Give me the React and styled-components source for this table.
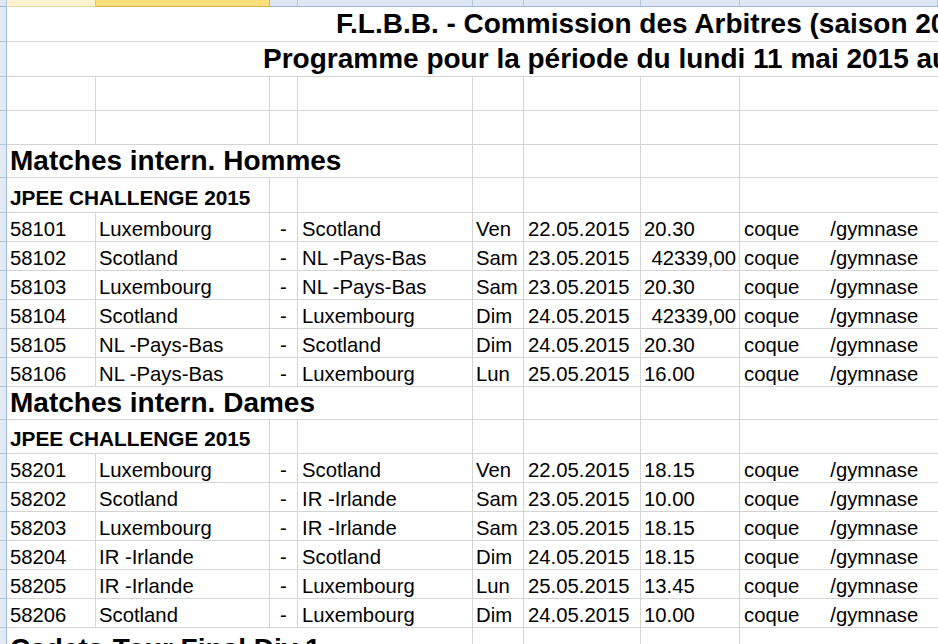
import styled, { createGlobalStyle } from 'styled-components';

const GlobalStyle = createGlobalStyle`
	html, body {
		margin: 0;
		padding: 0;
		background: #fff;
		overflow: hidden;
	}
	body {
		font-family: "Liberation Sans", Arial, sans-serif;
		color: #000;
	}
`

const COLUMNS = '7px 89px 174px 28px 175px 51px 117px 99px 1fr'
const GRID = '#d4d4d4'

const Sheet = styled.div`
	width: 938px;
	height: 644px;
	overflow: hidden;
`

const HeaderStrip = styled.div`
	display: grid;
	grid-template-columns: ${COLUMNS};
	height: 7px;
`

const ColHead = styled.div`
	box-sizing: border-box;
	background: ${p => p.$tone === 'hot' ? '#fbdf78' : p.$tone === 'warm' ? '#fdf3d0' : '#dde7f4'};
	border-bottom: 1px solid ${p => p.$tone === 'hot' ? '#d7b64f' : p.$tone === 'warm' ? '#e6d7a6' : '#9eb6ce'};
	border-right: 1px solid ${p => p.$tone === 'hot' ? '#d7b64f' : '#b3c5da'};
`

const Row = styled.div`
	display: grid;
	grid-template-columns: ${COLUMNS};
	height: ${p => p.$h}px;
`

const RowHead = styled.div`
	box-sizing: border-box;
	background: #e2eaf6;
	border-right: 1px solid #9eb6ce;
	border-bottom: 1px solid #b3c5da;
`

const Cell = styled.div`
	box-sizing: border-box;
	display: flex;
	align-items: flex-end;
	justify-content: ${p => p.$align === 'right' ? 'flex-end' : p.$align === 'center' ? 'center' : 'flex-start'};
	grid-column: span ${p => p.$span || 1};
	padding: 0 3px ${p => p.$pb || 0}px ${p => p.$indent || 3}px;
	border-bottom: 1px solid ${GRID};
	border-right: ${p => p.$open ? 'none' : `1px solid ${GRID}`};
	font-size: ${p => p.$size || 20.3}px;
	font-weight: ${p => p.$bold ? 700 : 400};
	white-space: nowrap;
	line-height: normal;
	min-width: 0;
`

const Hall = styled.span`
	margin-left: 31px;
`

const Title = ({ children, indent }) => (
	<Row $h={35}>
		<RowHead />
		<Cell $span={8} $open $bold $size={28} $indent={indent} $pb={1}>{children}</Cell>
	</Row>
)

const EmptyRow = ({ h }) => (
	<Row $h={h}>
		<RowHead />
		{[...Array(7)].map((_, i) => <Cell key={i} />)}
		<Cell $open />
	</Row>
)

// a bold line whose text runs over the first columns
const Heading = ({ children, h, span, size, pb }) => (
	<Row $h={h}>
		<RowHead />
		<Cell $span={span} $bold $size={size} $pb={pb}>{children}</Cell>
		{[...Array(7 - span)].map((_, i) => <Cell key={i} />)}
		<Cell $open />
	</Row>
)

const MatchRow = ({ m }) => {
	const [num, home, away, day, date, time] = m
	const isNumber = time.includes(',')
	return (
		<Row $h={29}>
			<RowHead />
			<Cell>{num}</Cell>
			<Cell>{home}</Cell>
			<Cell $align="center">-</Cell>
			<Cell $indent={4}>{away}</Cell>
			<Cell>{day}</Cell>
			<Cell $indent={4}>{date}</Cell>
			<Cell $align={isNumber ? 'right' : 'left'}>{time}</Cell>
			<Cell $open $indent={4}>coque<Hall>/gymnase</Hall></Cell>
		</Row>
	)
}

const hommes = [
	['58101', 'Luxembourg', 'Scotland', 'Ven', '22.05.2015', '20.30'],
	['58102', 'Scotland', 'NL -Pays-Bas', 'Sam', '23.05.2015', '42339,00'],
	['58103', 'Luxembourg', 'NL -Pays-Bas', 'Sam', '23.05.2015', '20.30'],
	['58104', 'Scotland', 'Luxembourg', 'Dim', '24.05.2015', '42339,00'],
	['58105', 'NL -Pays-Bas', 'Scotland', 'Dim', '24.05.2015', '20.30'],
	['58106', 'NL -Pays-Bas', 'Luxembourg', 'Lun', '25.05.2015', '16.00'],
]

const dames = [
	['58201', 'Luxembourg', 'Scotland', 'Ven', '22.05.2015', '18.15'],
	['58202', 'Scotland', 'IR -Irlande', 'Sam', '23.05.2015', '10.00'],
	['58203', 'Luxembourg', 'IR -Irlande', 'Sam', '23.05.2015', '18.15'],
	['58204', 'IR -Irlande', 'Scotland', 'Dim', '24.05.2015', '18.15'],
	['58205', 'IR -Irlande', 'Luxembourg', 'Lun', '25.05.2015', '13.45'],
	['58206', 'Scotland', 'Luxembourg', 'Dim', '24.05.2015', '10.00'],
]

export default function App() {
	return (
		<Sheet>
			<GlobalStyle />
			<HeaderStrip>
				<ColHead />
				<ColHead $tone="warm" />
				<ColHead $tone="hot" />
				{[...Array(6)].map((_, i) => <ColHead key={i} />)}
			</HeaderStrip>

			<Title indent={329}>F.L.B.B. - Commission des Arbitres (saison 2014-2015)</Title>
			<Title indent={256}>Programme pour la période du lundi 11 mai 2015 au dimanche 31 mai 2015</Title>
			<EmptyRow h={34} />
			<EmptyRow h={34} />

			<Heading h={33} span={4} size={28}>Matches intern. Hommes</Heading>
			<Heading h={35} span={2} size={20.8} pb={2}>JPEE CHALLENGE 2015</Heading>
			{hommes.map(m => <MatchRow key={m[0]} m={m} />)}

			<Heading h={33} span={4} size={28}>Matches intern. Dames</Heading>
			<Heading h={34} span={2} size={20.8} pb={2}>JPEE CHALLENGE 2015</Heading>
			{dames.map(m => <MatchRow key={m[0]} m={m} />)}

			<Heading h={40} span={4} size={28} pb={2}>Cadets:Tour Final Div 1</Heading>
		</Sheet>
	)
}
